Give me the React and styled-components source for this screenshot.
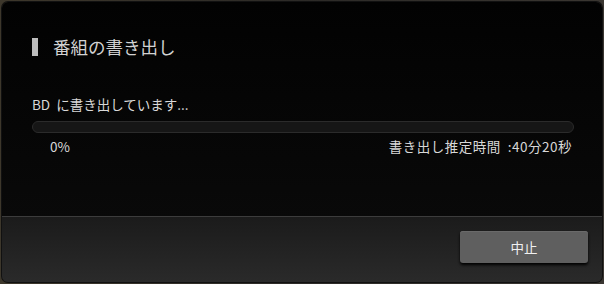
import React from 'react'
import styled, { createGlobalStyle } from 'styled-components'

const Global = createGlobalStyle`
  html, body {
    margin: 0;
    padding: 0;
    background: #3b362c;
    font-family: 'Noto Sans CJK JP', 'Noto Sans', sans-serif;
  }
`

const Screen = styled.div`
  width: 604px;
  height: 284px;
  padding: 2px;
  box-sizing: border-box;
  background: linear-gradient(90deg, #3d372b, #2c2a27 50%, #3a3631);
`

const Dialog = styled.div`
  height: 100%;
  border-radius: 6px;
  overflow: hidden;
  display: flex;
  flex-direction: column;
  background: linear-gradient(180deg, #020202, #0b0b0b);
  box-shadow: 0 0 0 1px #111;
`

const Body = styled.div`
  flex: 1;
  padding: 33px 28px 0 30px;
  display: flex;
  flex-direction: column;
`

const Title = styled.h1`
  margin: 0;
  display: flex;
  align-items: center;
  gap: 15px;
  font-size: 17.5px;
  font-weight: 400;
  color: #d2d2d2;
  line-height: 24px;
  &::before {
    content: '';
    width: 6px;
    height: 18px;
    background: #bdbdbd;
  }
`

const Status = styled.div`
  margin-top: 36px;
  font-size: 13.5px;
  line-height: 18px;
  color: #d8d8d8;
`

const Track = styled.div`
  margin-top: 8px;
  height: 12px;
  border-radius: 6px;
  background: #161616;
  border: 1px solid #2b2b2b;
  box-sizing: border-box;
`

const Meta = styled.div`
  display: flex;
  justify-content: space-between;
  padding: 0 2px 0 18px;
  margin-top: 4px;
  font-size: 13.5px;
  line-height: 18px;
  color: #d8d8d8;
`

const Estimate = styled.span`
  letter-spacing: 0.5px;
`

const Footer = styled.div`
  height: 66px;
  border-top: 1px solid #3c3c3c;
  background: linear-gradient(180deg, #1b1b1b, #2a2a2a);
  display: flex;
  justify-content: flex-end;
  align-items: flex-start;
  padding: 14px 14px 0 0;
  box-sizing: border-box;
`

const Button = styled.button`
  width: 128px;
  height: 32px;
  border: none;
  border-radius: 3px;
  background: #5f5f5f;
  color: #f0f0f0;
  font-family: inherit;
  font-size: 13.5px;
  box-shadow: 0 2px 3px #000, inset 0 1px 0 #6a6a6a;
`

export default function App() {
  return (
    <>
      <Global />
      <Screen>
        <Dialog>
          <Body>
            <Title>番組の書き出し</Title>
            <Status>BD&nbsp; に書き出しています...</Status>
            <Track />
            <Meta>
              <span>0%</span>
              <Estimate>書き出し推定時間 &nbsp;:40分20秒</Estimate>
            </Meta>
          </Body>
          <Footer>
            <Button>中止</Button>
          </Footer>
        </Dialog>
      </Screen>
    </>
  )
}
